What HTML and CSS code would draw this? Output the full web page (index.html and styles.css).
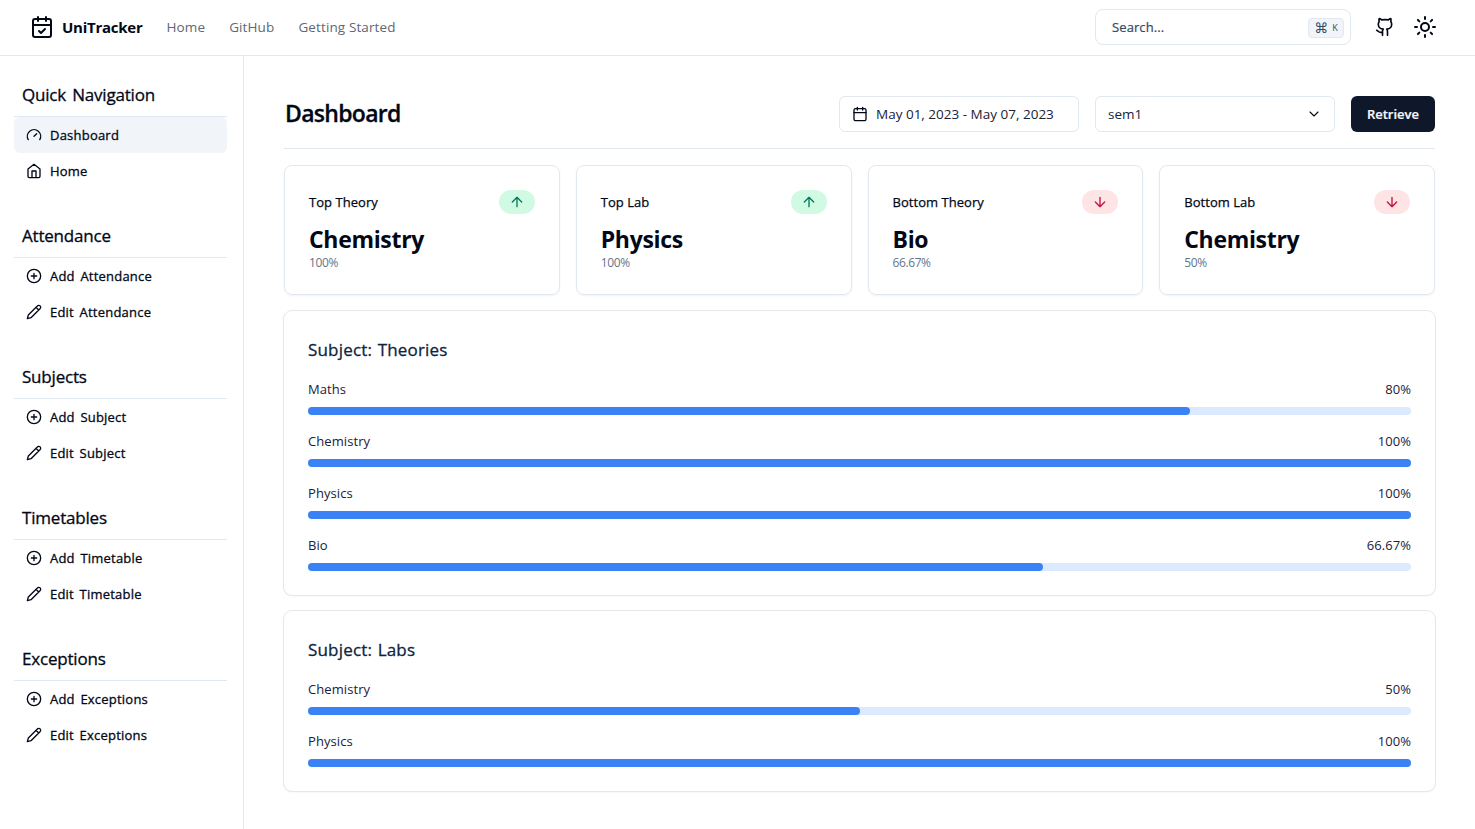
FILE: index.html
```html
<!DOCTYPE html>
<html lang="en">
<head>
<meta charset="utf-8">
<title>UniTracker</title>
<link rel="stylesheet" href="styles.css">
</head>
<body>
<svg class="defs" width="0" height="0">
  <symbol id="plus" viewBox="0 0 24 24"><circle cx="12" cy="12" r="10"/><path d="M8 12h8M12 8v8"/></symbol>
  <symbol id="pencil" viewBox="0 0 24 24"><path d="M17 3a2.850 2.830 0 1 1 4 4L7.500 20.500 2 22l1.500-5.500ZM15 5l4 4"/></symbol>
  <symbol id="gauge" viewBox="0 0 24 24"><path d="m12 14 4-4M3.340 19a10 10 0 1 1 17.320 0"/></symbol>
  <symbol id="home" viewBox="0 0 24 24"><path d="m3 9 9-7 9 7v11a2 2 0 0 1-2 2H5a2 2 0 0 1-2-2zM9 22V12h6v10"/></symbol>
  <symbol id="calendar" viewBox="0 0 24 24"><rect width="18" height="18" x="3" y="4" rx="2"/><path d="M16 2v4M8 2v4M3 10h18"/></symbol>
  <symbol id="up" viewBox="0 0 24 24"><path d="m5 12 7-7 7 7M12 19V5"/></symbol>
  <symbol id="down" viewBox="0 0 24 24"><path d="M12 5v14M19 12l-7 7-7-7"/></symbol>
</svg>
<header class="topbar">
  <a class="brand"><svg class="icon i24" viewBox="0 0 24 24"><rect width="18" height="18" x="3" y="4" rx="2"/><path d="M16 2v4M8 2v4M3 10h18M9 16l2 2 4-4"/></svg><span>UniTracker</span></a>
  <nav class="links"><a>Home</a><a>GitHub</a><a>Getting Started</a></nav>
  <div class="search"><span>Search...</span><kbd><span class="cmd">⌘</span><span>K</span></kbd></div>
  <svg class="icon i20 github" viewBox="0 0 24 24"><path d="M15 22v-4a4.800 4.800 0 0 0-1-3.500c3 0 6-2 6-5.500.080-1.250-.270-2.480-1-3.500.280-1.150.280-2.350 0-3.500 0 0-1 0-3 1.500-2.640-.500-5.360-.500-8 0C6 2 5 2 5 2c-.300 1.150-.300 2.350 0 3.500A5.403 5.403 0 0 0 4 9c0 3.500 3 5.500 6 5.500-.390.490-.680 1.050-.850 1.650-.170.600-.220 1.230-.150 1.850v4M9 18c-4.510 2-5-2-7-2"/></svg>
  <svg class="icon i24" viewBox="0 0 24 24"><circle cx="12" cy="12" r="4"/><path d="M12 2v2M12 20v2M4.930 4.930l1.410 1.410M17.660 17.660l1.410 1.410M2 12h2M20 12h2M6.340 17.660l-1.410 1.410M19.070 4.930l-1.410 1.410"/></svg>
</header>
<div class="shell">
  <aside class="sidebar">
    <section><h2>Quick Navigation</h2>
      <a class="item active"><svg class="icon i16"><use href="#gauge"/></svg><span>Dashboard</span></a>
      <a class="item"><svg class="icon i16"><use href="#home"/></svg><span>Home</span></a></section>
    <section><h2>Attendance</h2>
      <a class="item"><svg class="icon i16"><use href="#plus"/></svg><span>Add Attendance</span></a>
      <a class="item"><svg class="icon i16"><use href="#pencil"/></svg><span>Edit Attendance</span></a></section>
    <section><h2>Subjects</h2>
      <a class="item"><svg class="icon i16"><use href="#plus"/></svg><span>Add Subject</span></a>
      <a class="item"><svg class="icon i16"><use href="#pencil"/></svg><span>Edit Subject</span></a></section>
    <section><h2>Timetables</h2>
      <a class="item"><svg class="icon i16"><use href="#plus"/></svg><span>Add Timetable</span></a>
      <a class="item"><svg class="icon i16"><use href="#pencil"/></svg><span>Edit Timetable</span></a></section>
    <section><h2>Exceptions</h2>
      <a class="item"><svg class="icon i16"><use href="#plus"/></svg><span>Add Exceptions</span></a>
      <a class="item"><svg class="icon i16"><use href="#pencil"/></svg><span>Edit Exceptions</span></a></section>
  </aside>
  <main class="main">
    <div class="heading">
      <h1>Dashboard</h1>
      <div class="field"><svg class="icon i16"><use href="#calendar"/></svg><span>May 01, 2023 - May 07, 2023</span></div>
      <div class="field select"><span>sem1</span><svg class="icon i16 chevron" viewBox="0 0 24 24"><path d="m6 9 6 6 6-6"/></svg></div>
      <button class="retrieve">Retrieve</button>
    </div>
    <div class="cards">
      <article class="card"><div class="card-top"><span>Top Theory</span><span class="badge good"><svg class="icon i16"><use href="#up"/></svg></span></div><strong>Chemistry</strong><small>100%</small></article>
      <article class="card"><div class="card-top"><span>Top Lab</span><span class="badge good"><svg class="icon i16"><use href="#up"/></svg></span></div><strong>Physics</strong><small>100%</small></article>
      <article class="card"><div class="card-top"><span>Bottom Theory</span><span class="badge bad"><svg class="icon i16"><use href="#down"/></svg></span></div><strong>Bio</strong><small>66.67%</small></article>
      <article class="card"><div class="card-top"><span>Bottom Lab</span><span class="badge bad"><svg class="icon i16"><use href="#down"/></svg></span></div><strong>Chemistry</strong><small>50%</small></article>
    </div>
    <section class="panel"><h3>Subject: Theories</h3>
      <div class="row"><p><span>Maths</span><span>80%</span></p><div class="track"><div class="fill" style="width:80%"></div></div></div>
      <div class="row"><p><span>Chemistry</span><span>100%</span></p><div class="track"><div class="fill" style="width:100%"></div></div></div>
      <div class="row"><p><span>Physics</span><span>100%</span></p><div class="track"><div class="fill" style="width:100%"></div></div></div>
      <div class="row"><p><span>Bio</span><span>66.67%</span></p><div class="track"><div class="fill" style="width:66.67%"></div></div></div>
    </section>
    <section class="panel"><h3>Subject: Labs</h3>
      <div class="row"><p><span>Chemistry</span><span>50%</span></p><div class="track"><div class="fill" style="width:50%"></div></div></div>
      <div class="row"><p><span>Physics</span><span>100%</span></p><div class="track"><div class="fill" style="width:100%"></div></div></div>
    </section>
  </main>
</div>
</body>
</html>
```
FILE: styles.css
```css
* { box-sizing: border-box; margin: 0; padding: 0; }
body { height: 829px; overflow: hidden; display: flex; flex-direction: column; background: #fff; color: #020817; font: 14px/20px "Open Sans", "Noto Sans", sans-serif; }
.defs { display: none; }
.icon { flex: none; fill: none; stroke: currentColor; stroke-width: 2; stroke-linecap: round; stroke-linejoin: round; }
.i16 { width: 16px; height: 16px; }
.i20 { width: 20px; height: 20px; }
.i24 { width: 24px; height: 24px; }

.topbar { flex: none; height: 56px; padding: 0 38px 1px 30px; display: flex; align-items: center; border-bottom: 1px solid #e2e8f0; }
.brand { width: 112.500px; display: flex; align-items: center; gap: 8px; font-size: 15px; font-weight: 700; letter-spacing: -.250px; }
.links { display: flex; gap: 24px; margin-left: 24px; color: #5f6675; font-size: 13.500px; letter-spacing: .120px; }
.search { width: 256px; height: 36px; margin-left: auto; padding: 0 6px 0 16px; display: flex; align-items: center; justify-content: space-between; border: 1px solid #e2e8f0; border-radius: 8px; color: #334a68; font-size: 13px; letter-spacing: .100px; -webkit-text-stroke: .2px; }
kbd { height: 20px; width: 36px; margin-top: 1px; display: flex; align-items: center; justify-content: center; gap: 4px; border: 1px solid #e2e8f0; border-radius: 4px; background: #f1f5f9; font: 9px/18px "Open Sans", sans-serif; color: #334a68; -webkit-text-stroke: 0; }
.cmd { font: 14px/18px "DejaVu Sans", sans-serif; }
.github { margin: 0 18px 0 24px; }

.shell { flex: 1; min-height: 0; display: flex; }
.sidebar { width: 244px; flex: none; padding: 24px 16px 0 14px; display: flex; flex-direction: column; gap: 32px; border-right: 1px solid #e2e8f0; }
.sidebar h2 { height: 37px; padding: 1px 8px 0; border-bottom: 1px solid #e2e8f0; font-size: 17px; line-height: 28px; font-weight: 400; letter-spacing: -.200px; word-spacing: 2px; -webkit-text-stroke: .3px; }
.item { height: 36px; padding: 0 12px; display: flex; align-items: center; gap: 8px; border-radius: 6px; font-size: 13px; letter-spacing: .220px; word-spacing: 2px; -webkit-text-stroke: .3px; }
.item.active { background: #f1f5f9; }

.main { flex: 1; min-width: 0; padding: 40px 40px 0; display: flex; flex-direction: column; gap: 16px; }
.heading { height: 53px; padding-bottom: 16px; display: flex; gap: 16px; border-bottom: 1px solid #e2e8f0; }
h1 { margin-right: auto; padding-left: 1px; font-size: 23px; line-height: 34px; font-weight: 600; letter-spacing: -.700px; -webkit-text-stroke: .3px; }
.field { width: 240px; height: 36px; padding: 0 12px; display: flex; align-items: center; gap: 8px; border: 1px solid #e2e8f0; border-radius: 6px; font-size: 13.500px; color: #1a2238; }
.field .icon { color: #020817; }
.select { justify-content: space-between; }
.chevron { stroke-width: 1.700; }
.retrieve { width: 84px; height: 36px; border: 0; border-radius: 6px; background: #0f172a; color: #f8fafc; font: 600 13px/20px "Open Sans", sans-serif; -webkit-text-stroke: .2px; }

.cards { display: grid; grid-template-columns: repeat(4, 1fr); gap: 16px; }
.card { height: 130px; padding: 24px; display: flex; flex-direction: column; border: 1px solid #e2e8f0; border-radius: 8px; box-shadow: 0 1px 2px rgba(0, 0, 0, .05); }
.card-top { display: flex; height: 24px; margin-bottom: 9px; align-items: center; justify-content: space-between; font-size: 13px; letter-spacing: .040px; -webkit-text-stroke: .25px; }
.card strong { font-size: 23px; line-height: 32px; letter-spacing: -.320px; }
.card small { font-size: 12px; line-height: 16px; color: #64748b; letter-spacing: -.400px; }
.badge { width: 36px; height: 24px; display: flex; align-items: center; justify-content: center; border-radius: 12px; }
.good { background: #d1fae5; color: #047857; }
.bad { background: #ffe4e6; color: #be123c; }

.panel { padding: 24px; display: flex; flex-direction: column; gap: 16px; border-radius: 8px; box-shadow: 0 0 0 1px #e5e7eb, 0 1px 2px rgba(0, 0, 0, .08); }
h3 { height: 28px; font-size: 17px; line-height: 30px; font-weight: 400; color: #0f2440; letter-spacing: .180px; word-spacing: 1px; -webkit-text-stroke: .3px; }
.row p { display: flex; justify-content: space-between; margin-bottom: 8px; font-size: 13px; letter-spacing: .080px; color: #1a2238; }
.track { height: 8px; border-radius: 4px; background: #dbeafe; }
.fill { height: 8px; border-radius: 4px; background: #3b82f6; }
```
